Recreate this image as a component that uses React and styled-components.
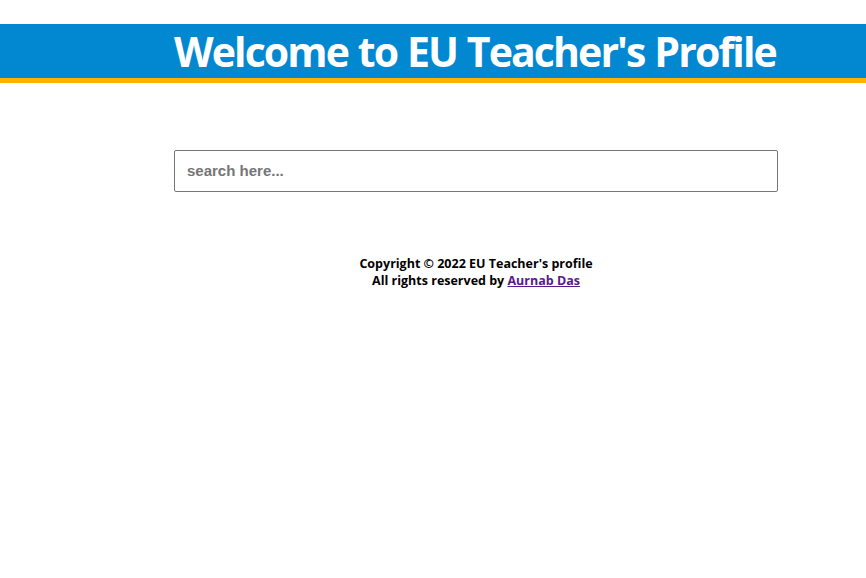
import styled, { createGlobalStyle } from 'styled-components'

const GlobalStyle = createGlobalStyle`
  body {
    margin: 0;
    background: #ffffff;
    font-family: "Open Sans", "Noto Sans", sans-serif;
  }
`

const Page = styled.div`
  padding-top: 24px;
`

const Header = styled.header`
  background: #0288d1;
  border-bottom: 5px solid #ffb300;
  height: 54px;
`

const Column = styled.div`
  width: 604px;
  margin-left: 174px;
`

const Title = styled.h1`
  margin: 0;
  color: #ffffff;
  font-size: 41px;
  font-weight: 700;
  line-height: 54px;
  letter-spacing: -1.9px;
  word-spacing: 1px;
  white-space: nowrap;
`

const SearchBox = styled.input`
  display: block;
  box-sizing: border-box;
  width: 604px;
  height: 42px;
  margin-top: 67px;
  padding: 0 12px 2px;
  border: 1px solid #767676;
  border-radius: 2px;
  font-family: "Liberation Sans", Arial, sans-serif;
  font-size: 15px;
  font-weight: 700;
  color: #333;
  outline: none;

  &::placeholder {
    color: #757575;
  }
`

const Footer = styled.footer`
  margin-top: 63px;
  text-align: center;
  font-size: 12.5px;
  font-weight: 700;
  line-height: 17px;
  color: #000;

  a {
    color: #551a8b;
  }
`

export default function App() {
  return (
    <Page>
      <GlobalStyle />
      <Header>
        <Column>
          <Title>Welcome to EU Teacher's Profile</Title>
        </Column>
      </Header>
      <Column>
        <SearchBox type="text" placeholder="search here..." />
        <Footer>
          Copyright © 2022 EU Teacher's profile
          <br />
          All rights reserved by <a href="#">Aurnab Das</a>
        </Footer>
      </Column>
    </Page>
  )
}
